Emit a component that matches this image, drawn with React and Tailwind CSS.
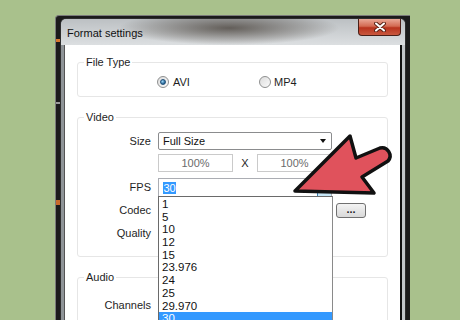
import React from "react";

const fpsOptions = ["1", "5", "10", "12", "15", "23.976", "24", "25", "29.970", "30"];

function Radio({ checked }) {
  return (
    <span className="flex h-[12px] w-[12px] items-center justify-center rounded-full border border-[#8e8f8f] bg-[linear-gradient(135deg,#dcdcdc,#fbfbfb)]">
      {checked && (
        <span className="h-[6px] w-[6px] rounded-full border border-[#1f4f78] bg-[radial-gradient(circle_at_35%_35%,#9bd6f7,#1d5b8d_75%)]" />
      )}
    </span>
  );
}

function Group({ title, className = "", children }) {
  return (
    <fieldset className={`ml-[12px] mr-[12px] min-w-0 rounded-[3px] border border-[#e6e6e6] ${className}`}>
      <legend className="ml-[6px] px-[2px] leading-[13px] text-[#1e1e1e]">{title}</legend>
      {children}
    </fieldset>
  );
}

function Row({ label, className = "", children }) {
  return (
    <div className={`flex items-center ${className}`}>
      <span className="w-[73px] text-right text-[#1e1e1e]">{label}</span>
      <div className="ml-[7px] flex items-center gap-[4px]">{children}</div>
    </div>
  );
}

function CloseIcon() {
  return (
    <svg width="12" height="10" viewBox="0 0 12 10">
      <path d="M2 1.5 L10 8.5 M10 1.5 L2 8.5" stroke="#5a2418" strokeWidth="4" strokeLinecap="round" />
      <path d="M2 1.5 L10 8.5 M10 1.5 L2 8.5" stroke="#ffffff" strokeWidth="2" strokeLinecap="round" />
    </svg>
  );
}

export default function App() {
  return (
    <div className="relative h-[320px] w-[460px] overflow-hidden bg-[#a9c18c] pl-[55px] pt-[15px] font-['Liberation_Sans',Arial,sans-serif] text-[11px] leading-[13px]">
      {/* window behind the dialog */}
      <div className="flex h-[305px] w-[355px] flex-col rounded-tl-[4px] border-l border-t border-[#7a7a7a] bg-[#1b1b1b] pt-[2px]">
        <div className="flex flex-1 min-h-0">
          <div className="flex w-[4px] flex-col">
            <div className="h-[21px]" />
            <div className="h-[3px] bg-[#d8772e]" />
            <div className="h-[60px]" />
            <div className="h-[2px] bg-[#9a9a9a]" />
            <div className="h-[96px]" />
            <div className="h-[5px] bg-[#c86a2c]" />
          </div>

          {/* dialog */}
          <div className="flex w-[346px] flex-col rounded-t-[6px] border border-b-0 border-[#2e2e2e] bg-[linear-gradient(to_right,#8f9498,#c3c7ca)]">
            <div className="flex h-[26px] items-start justify-between rounded-t-[5px] bg-[radial-gradient(ellipse_110px_17px_at_168px_9px,rgba(70,63,56,0.78),rgba(70,63,56,0.25)_70%,rgba(70,63,56,0)),linear-gradient(to_bottom,#bcc0c3,#dcdfe1)]">
              <span className="ml-[6px] mt-[8px] text-[11px] leading-[13px] text-[#111]">Format settings</span>
              <div className="mr-[4px] flex h-[17px] w-[43px] items-center justify-center rounded-b-[4px] border border-t-0 border-[#4a1f17] bg-[linear-gradient(to_bottom,#eaa897,#d36a52_45%,#b8331d_55%,#c9583e)]">
                <CloseIcon />
              </div>
            </div>

            <div className="flex flex-1 min-h-0">
              <div className="w-[3px]" />
              {/* white client area */}
              <div className="flex-1 border-l border-r-2 border-[#555] border-r-[#111] bg-white pt-[10.5px]">
                <Group title="File Type" className="pb-[7.5px]">
                  <div className="mt-[7px] flex h-[13px] items-center pl-[79px]">
                    <div className="flex w-[102px] items-center gap-[4px]">
                      <Radio checked />
                      <span className="text-[#1e1e1e]">AVI</span>
                    </div>
                    <div className="flex items-center gap-[3px]">
                      <Radio />
                      <span className="text-[#1e1e1e]">MP4</span>
                    </div>
                  </div>
                </Group>

                <Group title="Video" className="mt-[13.5px] pb-[13px]">
                  <Row label="Size" className="mt-[8.5px] h-[18px]">
                    <div className="flex h-[18px] w-[174px] items-center justify-between rounded-[2px] border border-[#8b8c8e] bg-white pl-[4px] pr-[5px]">
                      <span className="text-[#111]">Full Size</span>
                      <span className="h-0 w-0 border-l-[3.5px] border-r-[3.5px] border-t-[4px] border-l-transparent border-r-transparent border-t-[#111]" />
                    </div>
                  </Row>
                  <Row label="" className="mt-[4px] h-[18px]">
                    <div className="flex w-[174px] items-center justify-between">
                      <div className="flex h-[18px] w-[75px] items-center justify-center border border-[#cacaca] text-[#6b6b6b]">100%</div>
                      <span className="text-[#1e1e1e]">X</span>
                      <div className="flex h-[18px] w-[75px] items-center justify-center border border-[#cacaca] text-[#6b6b6b]">100%</div>
                    </div>
                  </Row>
                  <Row label="FPS" className="mt-[6px] h-[19px]">
                    <div className="relative z-10 flex h-[19px] w-[174px] items-stretch border border-[#abadb3] bg-white">
                      <div className="flex flex-1 items-center pl-[4px]">
                        <span className="bg-[#3399ff] px-[0.5px] leading-[12px] text-white">30</span>
                      </div>
                      <div className="flex w-[14px] items-end justify-center border-l border-[#3c7fb1] bg-[linear-gradient(to_bottom,#e5f4fc,#c4e5f6)] pb-[3px]">
                        <span className="h-0 w-0 border-l-[3px] border-r-[3px] border-t-[3px] border-l-transparent border-r-transparent border-t-[#222]" />
                      </div>
                      <div className="absolute left-[-1px] top-full w-[175px] border border-[#6a6a6a] border-r-[#8a8a8a] bg-white pt-[1px] text-[11.5px] text-[#111]">
                        {fpsOptions.map((opt) => (
                          <div
                            key={opt}
                            className={`h-[12.7px] pl-[3px] leading-[12.7px] ${opt === "30" ? "bg-[#3399ff] text-white" : ""}`}
                          >
                            {opt}
                          </div>
                        ))}
                      </div>
                    </div>
                  </Row>
                  <Row label="Codec" className="mt-[3px] h-[20px]">
                    <div className="h-[19px] w-[174px]" />
                    <div className="flex h-[15px] w-[30px] items-center justify-center rounded-[3px] border border-[#707070] bg-[linear-gradient(to_bottom,#f4f4f4,#e6e6e6_50%,#d9d9d9)] pb-[3px] font-bold leading-[10px] text-[#222]">
                      ...
                    </div>
                  </Row>
                  <Row label="Quality" className="mt-[3px] h-[20px]">
                    <div className="h-[19px] w-[174px]" />
                  </Row>
                </Group>

                <Group title="Audio" className="mt-[13.5px] pb-[10px]">
                  <Row label="Channels" className="mt-[11.5px] h-[20px]">
                    <div className="h-[19px] w-[174px]" />
                  </Row>
                </Group>
              </div>
              <div className="w-[3px]" />
            </div>
          </div>

          <div className="w-[4px]" />
        </div>
      </div>

      {/* pointer arrow */}
      <svg className="pointer-events-none absolute left-0 top-0 z-20" width="460" height="320" viewBox="0 0 460 320">
        <path
          d="M295 191 L350 136 L356 158 L380 148 A8 8 0 0 1 388 161 L362 177 L374 193 Z"
          fill="#e0525c"
          stroke="#111"
          strokeWidth="3.5"
          strokeLinejoin="round"
        />
      </svg>
    </div>
  );
}
